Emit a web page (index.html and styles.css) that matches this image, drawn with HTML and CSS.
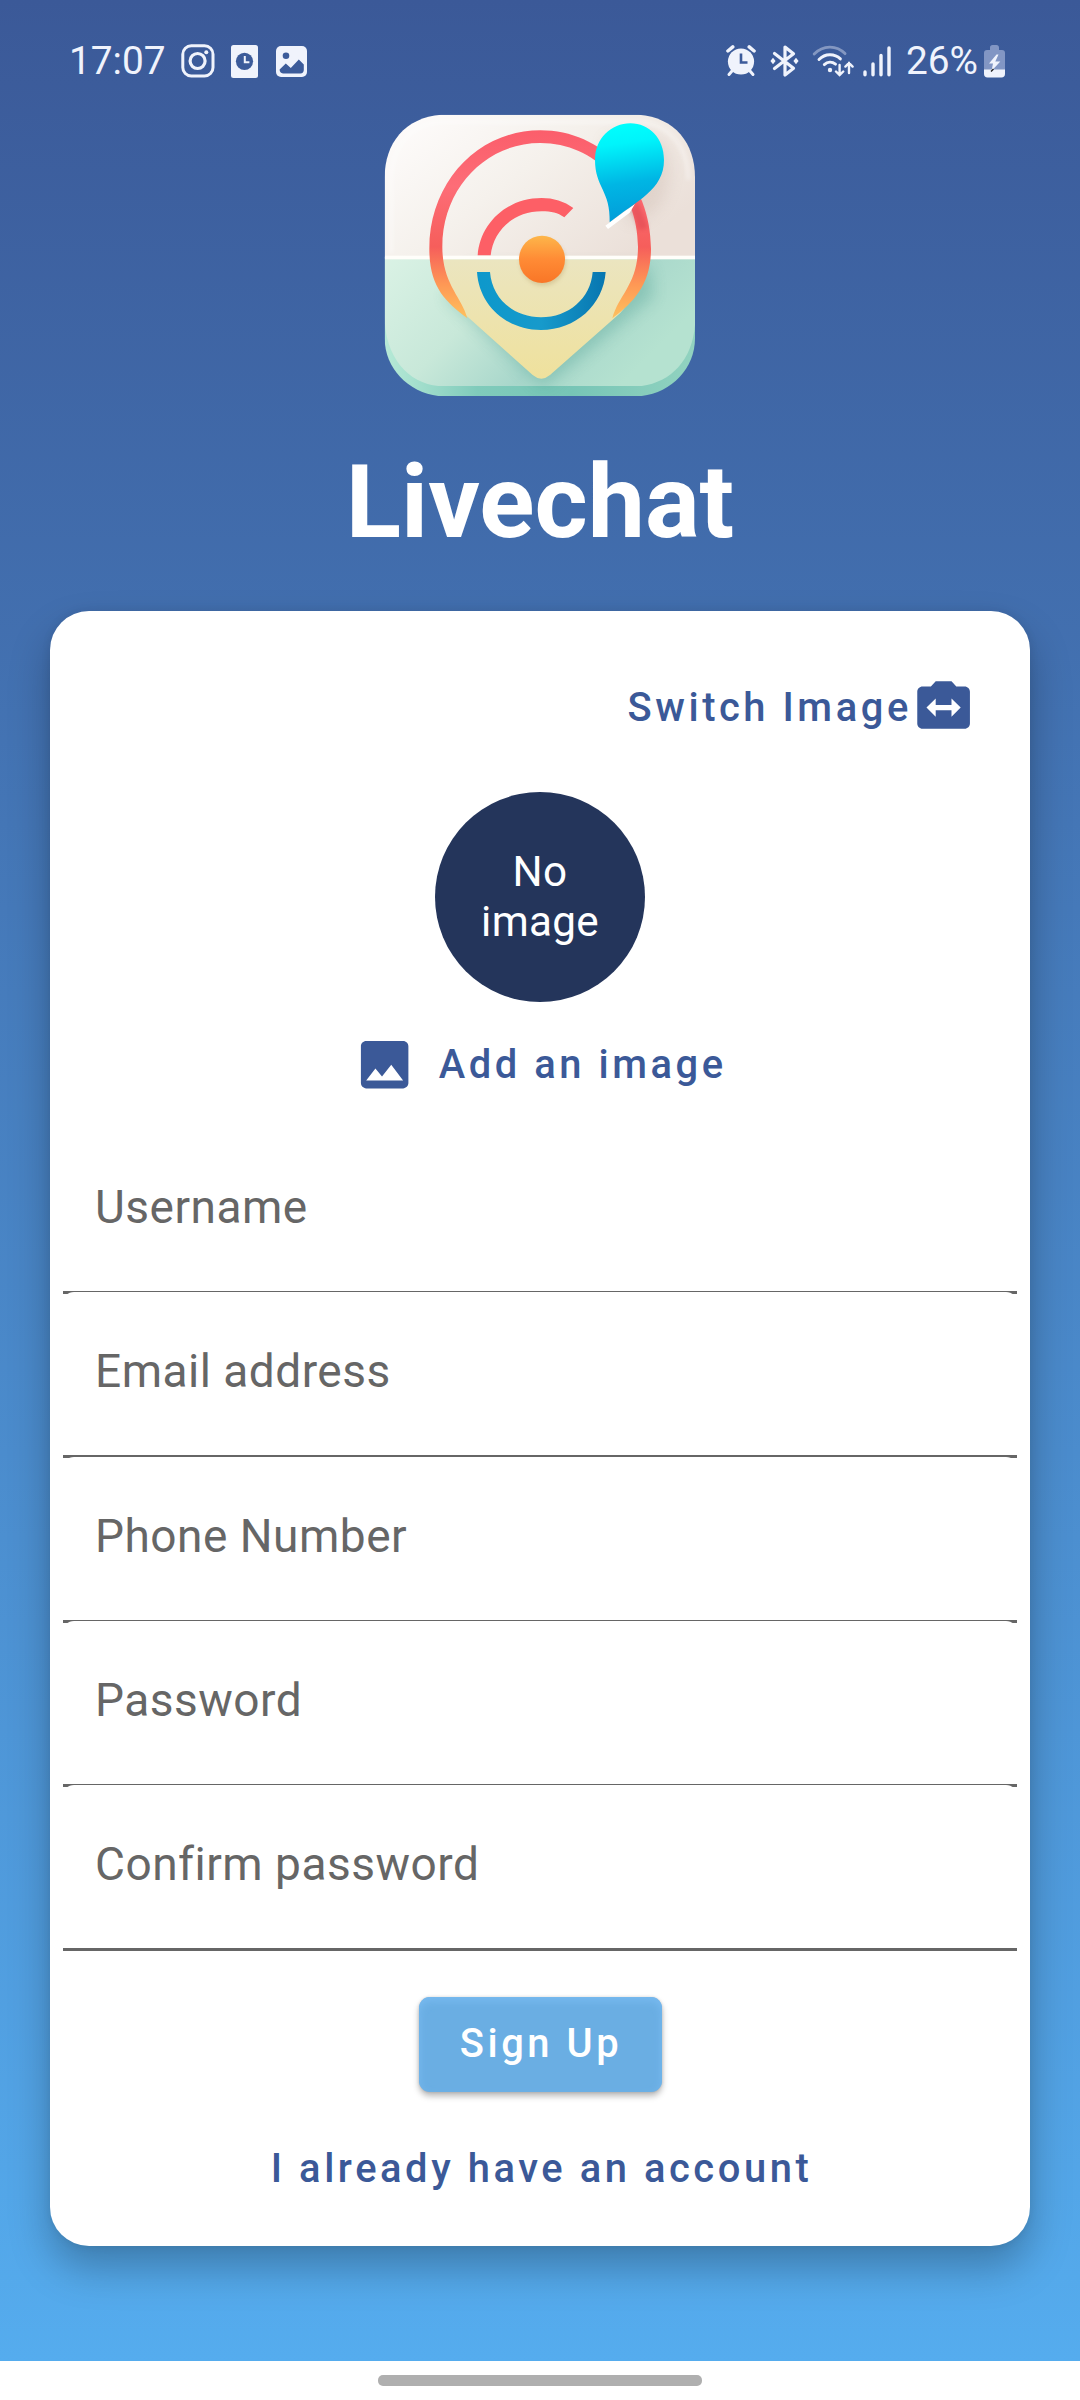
FILE: index.html
```html
<!DOCTYPE html>
<html lang="en">
<head>
<meta charset="utf-8">
<title>Livechat</title>
<link rel="stylesheet" href="styles.css">
</head>
<body>
<div class="screen">
  <header class="status">
    <div class="status-left">
      <span class="time">17:07</span>
      <svg class="ic-insta" width="34" height="34" viewBox="0 0 34 34" fill="none" stroke="#f0f3fc">
        <rect x="1.8" y="1.8" width="30.2" height="30.2" rx="8.5" stroke-width="3"/>
        <circle cx="16.6" cy="17" r="7.5" stroke-width="3.2"/>
        <circle cx="25.3" cy="8.3" r="2" fill="#f0f3fc" stroke="none"/>
      </svg>
      <svg class="ic-doc" width="27" height="33" viewBox="0 0 27 33">
        <rect width="27" height="33" rx="2.5" fill="#f0f3fc"/>
        <circle cx="13.5" cy="16.3" r="8.6" fill="#3c5b9a"/>
        <path d="M13.8 11v6.2h4.6" fill="none" stroke="#f0f3fc" stroke-width="2"/>
      </svg>
      <svg class="ic-pic" width="31" height="31" viewBox="0 0 31 31">
        <rect width="31" height="31" rx="5" fill="#f0f3fc"/>
        <circle cx="10" cy="9.8" r="3.3" fill="#3c5b9a"/>
        <path d="M3.600 23.500 9.800 17.600l5 4.400 8-8.600 5 5.200v5.400c0 2-1.300 3.400-3.300 3.400H7c-2.200 0-3.400-1.600-3.400-3.900z" fill="#3c5b9a"/>
      </svg>
    </div>
    <div class="status-right">
      <svg width="30" height="32" viewBox="0 0 30 32">
        <circle cx="15" cy="16.500" r="13.100" fill="#f0f3fc"/>
        <path d="M1.900 6 6.800 1.900M28.100 6 23.200 1.900" stroke="#f0f3fc" stroke-width="3.400" stroke-linecap="round"/>
        <path d="M6 26l-3 3.500M24 26l3 3.500" stroke="#f0f3fc" stroke-width="3" stroke-linecap="round"/>
        <path d="M15 8.500v9h6.500" fill="none" stroke="#3c5b9a" stroke-width="2.600"/>
      </svg>
      <svg class="ic-bt" width="29" height="34" viewBox="0 0 29 34" fill="none" stroke="#f0f3fc" stroke-width="3.200" stroke-linejoin="round" stroke-linecap="round">
        <path d="M4.500 9.500 23.500 24.200 15 31V3l8.500 6.800L4.500 24.500"/>
        <path d="M.4 17 3 13.800 5.600 17 3 20.200zM23.400 17l2.600-3.200 2.600 3.200-2.600 3.200z" fill="#f0f3fc" stroke="none"/>
      </svg>
      <svg class="ic-wifi" width="42" height="32" viewBox="0 0 42 32" fill="none" stroke="#f0f3fc" stroke-width="2.900" stroke-linecap="round">
        <path d="M2.200 9C11 0 24.500-.2 33 8.600" opacity=".4"/>
        <path d="M7 14.500c6.200-6.200 15.500-6.200 21.400-.6M12.300 19.600c3.200-3 7.800-3.200 11.200-.4"/>
        <circle cx="18" cy="25" r="2.200" fill="#f0f3fc" stroke="none"/>
        <path d="M27.600 20v10M24 26.500l3.600 3.600 3.600-3.600M37 28V18M33.400 21.600l3.600-3.600 3.600 3.600" stroke-width="2.400"/>
      </svg>
      <svg class="ic-sig" width="28" height="31" viewBox="0 0 28 31" stroke="#f0f3fc" stroke-width="3.400" stroke-linecap="round">
        <path d="M2 26v2.700M10 18v10.700M18 9.500v19.200M26 2v26.700"/>
      </svg>
      <span class="pct">26%</span>
      <svg class="ic-bat" width="21" height="34" viewBox="0 0 21 34">
        <path d="M6 6V3.500C6 2 7 1 8.500 1h4C14 1 15 2 15 3.500V6h3c2 0 3 1.200 3 3v17H0V9c0-1.800 1-3 3-3z" fill="#8296c4"/>
        <path d="M0 25.500h21V30c0 2-1.300 3.500-3.500 3.500h-14C1.300 33.500 0 32 0 30z" fill="#f0f3fc"/>
        <path d="M12.500 10.500 5 19.500h4l-1.500 7.500 8.800-9.500h-5l3.200-7z" fill="#f0f3fc"/>
        <path d="M7 27.500 9.500 25" stroke="#222" stroke-width="1.500"/>
      </svg>
    </div>
  </header>

  <svg class="logo" width="340" height="310" viewBox="0 0 1020 930">
    <defs>
      <clipPath id="tile"><path d="M214 44H806C915 52 975 130 975 232V715C975 805 905 878 815 888H205C115 878 44 805 44 715V232C44 130 105 52 214 44z"/></clipPath>
      <linearGradient id="sky" x1="0" y1="0" x2="1" y2=".6"><stop offset="0" stop-color="#fffdfd"/><stop offset=".5" stop-color="#f5f1ec"/><stop offset="1" stop-color="#ebe0d9"/></linearGradient>
      <linearGradient id="sea" x1="0" y1="0" x2="1" y2=".4"><stop offset="0" stop-color="#daf2e5"/><stop offset=".4" stop-color="#c8e8d9"/><stop offset=".7" stop-color="#a8d7cb"/><stop offset="1" stop-color="#b5e2d0"/></linearGradient>
      <linearGradient id="edge" x1="0" y1="0" x2="1" y2="0"><stop offset="0" stop-color="#b7ead7"/><stop offset=".3" stop-color="#80cbbb"/><stop offset=".6" stop-color="#77c5b6"/><stop offset="1" stop-color="#92d3c0"/></linearGradient>
      <linearGradient id="ring" gradientUnits="userSpaceOnUse" x1="0" y1="90" x2="0" y2="655"><stop offset="0" stop-color="#fb5e6b"/><stop offset=".3" stop-color="#fd6d77"/><stop offset=".62" stop-color="#f65e5b"/><stop offset=".82" stop-color="#fe9855"/><stop offset="1" stop-color="#fec15e"/></linearGradient>
      <linearGradient id="sun" x1="0" y1="0" x2="0" y2="1"><stop offset="0" stop-color="#fdb64a"/><stop offset=".5" stop-color="#ff8b35"/><stop offset="1" stop-color="#f97627"/></linearGradient>
      <linearGradient id="drop" x1=".4" y1="0" x2=".5" y2="1"><stop offset="0" stop-color="#00fffd"/><stop offset=".2" stop-color="#00f4fb"/><stop offset=".6" stop-color="#00b6e4"/><stop offset="1" stop-color="#039bd8"/></linearGradient>
      <linearGradient id="smile" x1="0" y1="0" x2="1" y2="0"><stop offset="0" stop-color="#0d98cb"/><stop offset=".5" stop-color="#179acb"/><stop offset="1" stop-color="#0876b0"/></linearGradient>
      <linearGradient id="sand" gradientUnits="userSpaceOnUse" x1="0" y1="475" x2="0" y2="840"><stop offset="0" stop-color="#ebe5c0"/><stop offset="1" stop-color="#efe19c"/></linearGradient>
      <filter id="soft" x="-30%" y="-30%" width="160%" height="160%"><feGaussianBlur stdDeviation="22"/></filter>
      <filter id="fine" x="-10%" y="-10%" width="120%" height="120%"><feGaussianBlur stdDeviation="7"/></filter>
    </defs>
    <g clip-path="url(#tile)">
      <rect x="40" y="40" width="940" height="435" fill="url(#sky)"/>
      <rect x="40" y="472" width="940" height="420" fill="url(#edge)"/>
      <path d="M44 472H976V650C976 770 910 845 815 858H205C115 850 44 770 44 650z" fill="url(#sea)"/>
      <path d="M64 460V240C64 140 125 70 214 66H806C895 70 955 140 955 240" fill="none" stroke="#fff" stroke-width="10" opacity=".45" filter="url(#fine)"/>
      <path d="M225 590 520 865 850 590 840 500H300z" fill="#3e9488" opacity=".3" filter="url(#soft)"/>
      <path d="M700 120Q900 60 900 200T780 370z" fill="#a88a7c" opacity=".18" filter="url(#soft)"/>
      <path d="M205 478H820C815 550 795 590 750 640L540 825Q514 847 488 825L270 630C225 590 208 550 205 478z" fill="url(#sand)"/>
      <rect x="44" y="467" width="932" height="11" fill="#fffefa"/>
      <path d="M292 655C225 604 178 560 178 446 178 245 325 91 511 91S843 245 843 446C843 550 795 604 727 655 745 585 804 553 804 440 804 265 675 129 511 129S217 265 217 440C217 553 275 590 292 655z" fill="url(#ring)"/>
      <path d="M323 466C330 370 410 294 515 294 550 294 583 304 610 324L583 352C562 338 545 334 515 334 430 334 370 392 362 466z" fill="#fd5f66"/>
      <path d="M321 516H360C366 595 430 652 513 652S662 595 668 516H707C700 615 617 690 513 690S327 615 321 516z" fill="url(#smile)"/>
      <ellipse cx="519" cy="487" rx="68" ry="70" fill="#a98950" opacity=".3" filter="url(#fine)"/>
      <ellipse cx="516" cy="478" rx="69" ry="71" fill="url(#sun)"/>
      <path d="M780 332 803 300 835 385 805 390C800 366 792 350 780 332z" fill="#c52d3e" opacity=".3" filter="url(#fine)"/>
      <path d="M706 377 795 311 779 338 714 387z" fill="#fff"/>
      <path d="M719 367C722 272 675 262 675 180 675 115 724 70 781 70S882 115 882 180C882 270 800 302 719 367z" fill="url(#drop)"/>
    </g>
  </svg>

  <h1 class="title">Livechat</h1>

  <main class="card">
    <div class="switch">
      <span>Switch Image</span>
      <svg width="63.200" height="63.200" viewBox="0 0 24 24"><path fill="#3b5998" d="M20 4h-3.170L15 2H9L7.170 4H4c-1.100 0-2 .9-2 2v12c0 1.100.9 2 2 2h16c1.100 0 2-.9 2-2V6c0-1.100-.9-2-2-2zm-5 11.500V13H9v2.500L5.500 12 9 8.500V11h6V8.500l3.500 3.500-3.500 3.500z"/></svg>
    </div>
    <div class="avatar">No<br>image</div>
    <div class="add">
      <svg width="63.300" height="63.300" viewBox="0 0 24 24"><path fill="#3b5998" d="M21 19V5c0-1.100-.9-2-2-2H5c-1.100 0-2 .9-2 2v14c0 1.100.9 2 2 2h14c1.100 0 2-.9 2-2zM8.500 13.500l2.500 3.010L14.500 12l4.500 6H5l3.500-4.500z"/></svg>
      <span>Add an image</span>
    </div>
    <div class="fields">
      <div class="field">Username</div>
      <div class="field">Email address</div>
      <div class="field">Phone Number</div>
      <div class="field">Password</div>
      <div class="field">Confirm password</div>
    </div>
    <button class="signup">Sign Up</button>
    <a class="login">I already have an account</a>
  </main>

  <footer class="nav"><div class="handle"></div></footer>
</div>
</body>
</html>
```

FILE: styles.css
```css
* { box-sizing: border-box; }
body { margin: 0; font-family: Roboto, sans-serif; }

.screen {
  width: 1080px;
  height: 2400px;
  display: flex;
  flex-direction: column;
  align-items: center;
  overflow: hidden;
  background: linear-gradient(#3b5998 0, #55acee 2361px);
}

.status {
  width: 100%;
  height: 100px;
  padding: 22px 75px 0 69px;
  display: flex;
  justify-content: space-between;
  align-items: flex-start;
  color: #f0f3fc;
  font-size: 38.800px;
}
.status-left, .status-right { display: flex; align-items: center; height: 78px; }
.status svg { flex: none; }
.time { width: 112px; line-height: 78px; }
.ic-doc { margin-left: 16px; }
.ic-pic { margin-left: 18px; }
.ic-bt { margin-left: 14px; }
.ic-wifi { margin-left: 13px; }
.ic-sig { margin-left: 9px; }
.pct { width: 78px; margin-left: 15px; line-height: 78px; white-space: nowrap; }

.logo { display: block; flex: none; }

.title {
  margin: 33px 0 0;
  height: 118px;
  line-height: 118px;
  color: #fff;
  font-size: 102.200px;
  font-weight: 700;
}

.card {
  width: 980px;
  height: 1635px;
  margin-top: 50px;
  padding: 65px 13px 0;
  display: flex;
  flex-direction: column;
  align-items: center;
  flex: none;
  background: #fff;
  border-radius: 39px;
  box-shadow: 0 22px 40px rgba(0, 0, 0, .26), 0 0 10px rgba(0, 0, 0, .08);
}

.switch, .add, .signup, .login {
  font-size: 39.900px;
  font-weight: 500;
  letter-spacing: 3.550px;
  color: #3b5998;
  white-space: nowrap;
}
.switch {
  align-self: flex-end;
  display: flex;
  align-items: center;
  height: 63px;
  margin-right: 42px;
}

.avatar {
  width: 210px;
  height: 210px;
  margin-top: 53px;
  padding-top: 55px;
  flex: none;
  border-radius: 50%;
  background: #24355b;
  color: #fff;
  text-align: center;
  font-size: 42.200px;
  line-height: 50px;
  letter-spacing: .3px;
}

.add {
  display: flex;
  align-items: center;
  gap: 22px;
  height: 63px;
  margin-top: 31px;
}

.fields { width: 954px; margin-top: 32px; }
.field {
  position: relative;
  height: 166px;
  padding-left: 32px;
  line-height: 158px;
  font-size: 46px;
  letter-spacing: .5px;
  color: #666;
  background: #fff;
  border-bottom: 3px solid #666;
  border-radius: 11px 11px 0 0;
}
.field + .field { margin-top: -1.700px; }

.signup {
  width: 243px;
  height: 95px;
  margin-top: 46px;
  padding: 0 0 3px 2px;
  border: 0;
  border-radius: 11px;
  font-family: inherit;
  color: #fff;
  background: #6aaee3;
  box-shadow: 0 4px 6px rgba(0, 0, 0, .28), 0 0 3px rgba(0, 0, 0, .14), inset 0 4px 9px #78baf0;
}
.login { margin-top: 52px; padding-left: 3px; line-height: 50px; }

.nav {
  width: 100%;
  height: 39px;
  margin-top: auto;
  padding-top: 14px;
  flex: none;
  background: #fff;
}
.handle {
  width: 324px;
  height: 11px;
  margin: 0 auto;
  border-radius: 5px;
  background: #afafaf;
}
```
